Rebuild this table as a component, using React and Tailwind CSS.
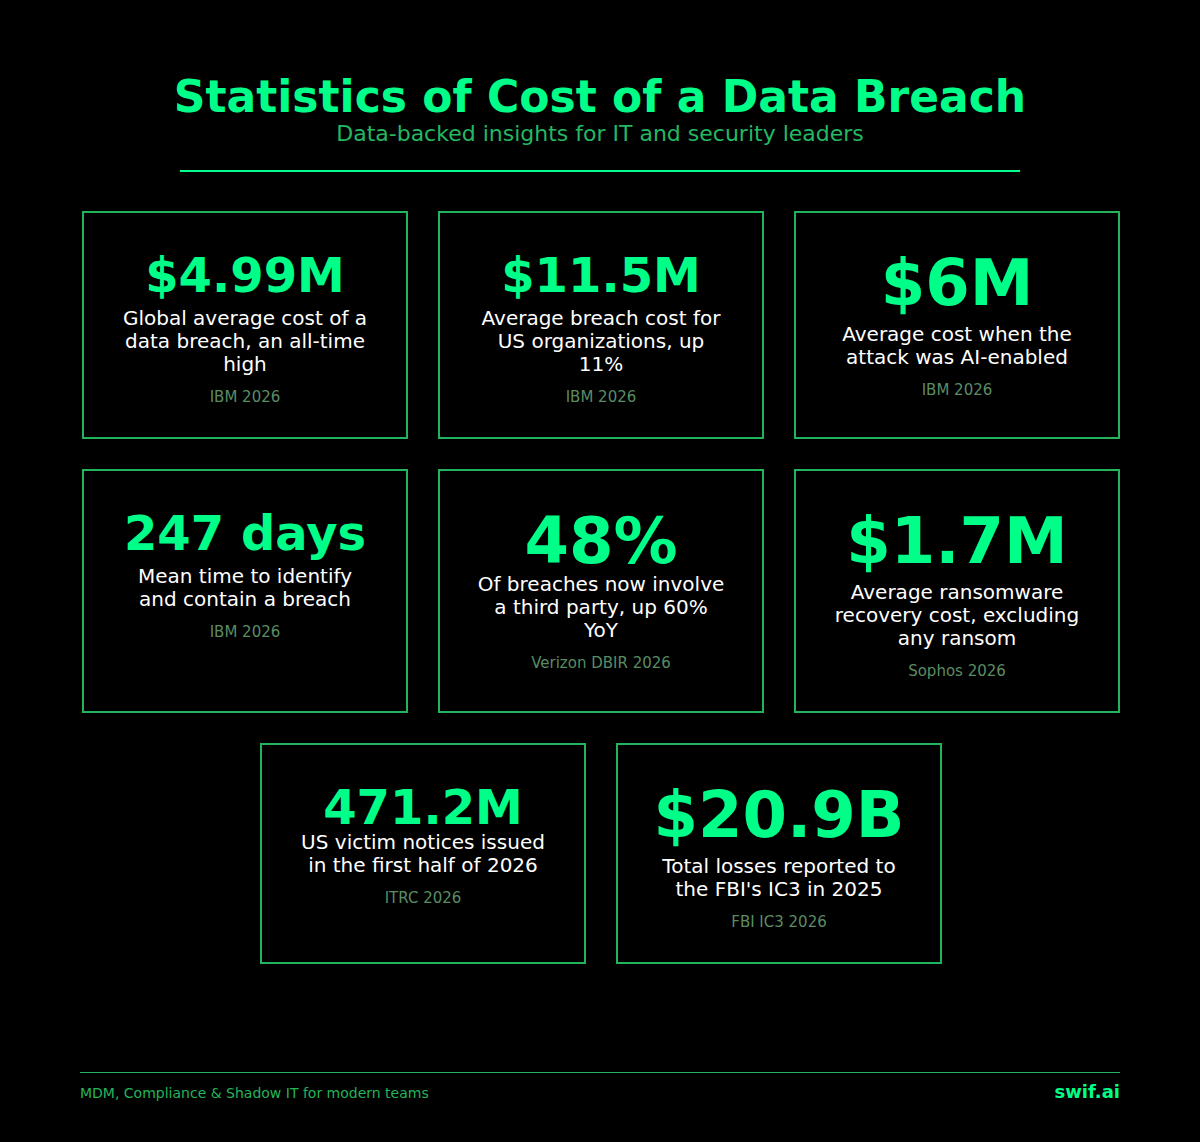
import React from 'react';

const stats = [
  { value: '$4.99M', big: false, desc: 'Global average cost of a data breach, an all-time high', source: 'IBM 2026' },
  { value: '$11.5M', big: false, desc: 'Average breach cost for US organizations, up 11%', source: 'IBM 2026' },
  { value: '$6M', big: true, desc: 'Average cost when the attack was AI-enabled', source: 'IBM 2026' },
  { value: '247 days', big: false, desc: 'Mean time to identify and contain a breach', source: 'IBM 2026' },
  { value: '48%', big: true, tight: true, desc: 'Of breaches now involve a third party, up 60% YoY', source: 'Verizon DBIR 2026' },
  { value: '$1.7M', big: true, desc: 'Average ransomware recovery cost, excluding any ransom', source: 'Sophos 2026' },
];

const lastRow = [
  { value: '471.2M', big: false, tight: true, desc: 'US victim notices issued in the first half of 2026', source: 'ITRC 2026' },
  { value: '$20.9B', big: true, desc: "Total losses reported to the FBI's IC3 in 2025", source: 'FBI IC3 2026' },
];

const StatCard = ({ stat, className = '' }) => (
  <div className={`border-2 border-[#22b45a] pt-[38px] pb-[31px] px-[36px] flex flex-col items-center text-center ${className}`}>
    <div
      className={`font-bold leading-none text-[#00ff88] whitespace-nowrap ${stat.big ? 'text-[64px]' : 'text-[48px]'} ${stat.tight ? 'mb-0' : 'mb-2'}`}
    >
      {stat.value}
    </div>
    <p className="text-[20px] leading-[23px] text-white">{stat.desc}</p>
    <p className="mt-3 text-[15px] leading-[18px] text-[#5a8c64]">{stat.source}</p>
  </div>
);

export default function App() {
  return (
    <div className="min-h-[1142px] w-[1200px] bg-black font-['DejaVu_Sans',sans-serif] flex flex-col">
      {/* Header */}
      <header className="pt-[73px] flex flex-col items-center">
        <h1 className="text-[44px] font-bold leading-[1.1] text-[#00ff88]">Statistics of Cost of a Data Breach</h1>
        <p className="text-[22px] leading-[26px] text-[#25b862]">Data-backed insights for IT and security leaders</p>
        <div className="mt-[23px] h-[2px] w-[840px] bg-[#00ff88]"></div>
      </header>

      {/* Cards */}
      <main className="mt-[39px] pl-[82px] pr-[80px]">
        <div className="grid grid-cols-3 gap-[30px]">
          {stats.map((s) => (
            <StatCard key={s.value} stat={s} />
          ))}
        </div>
        <div className="mt-[30px] flex justify-center gap-[30px]">
          {lastRow.map((s) => (
            <StatCard key={s.value} stat={s} className="w-[326px]" />
          ))}
        </div>
      </main>

      {/* Footer */}
      <footer className="mt-[108px] mx-[80px]">
        <div className="h-px bg-[#22b45a]"></div>
        <div className="pt-[5px] flex items-baseline justify-between">
          <span className="text-[14px] text-[#22b45a]">MDM, Compliance &amp; Shadow IT for modern teams</span>
          <span className="text-[18px] font-bold text-[#00ff88]">swif.ai</span>
        </div>
      </footer>
    </div>
  );
}
